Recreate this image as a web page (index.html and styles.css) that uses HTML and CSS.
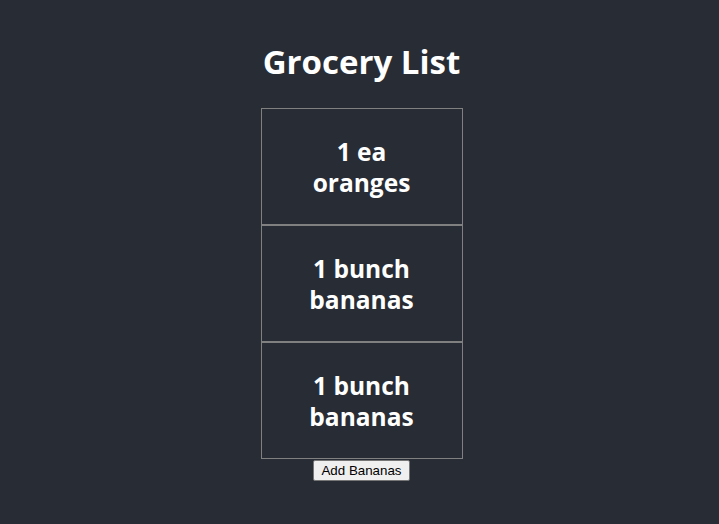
FILE: index.html
```html
<!DOCTYPE html>
<html>
<head>
<meta charset="utf-8">
<link rel="stylesheet" href="styles.css">
</head>
<body>
<div class="app">
  <h1 class="title">Grocery List</h1>
  <div class="list">
    <div class="item"><h2 class="item-text">1 ea oranges</h2></div>
    <div class="item"><h2 class="item-text">1 bunch bananas</h2></div>
    <div class="item"><h2 class="item-text">1 bunch bananas</h2></div>
  </div>
  <button class="add-btn">Add Bananas</button>
</div>
</body>
</html>
```
FILE: styles.css
```css
html, body {
  margin: 0;
  padding: 0;
  background: #282c34;
  height: 100%;
}
.app {
  display: flex;
  flex-direction: column;
  align-items: center;
  padding-top: 42px;
  padding-left: 4px;
  color: #fff;
  font-family: "Open Sans", "DejaVu Sans", sans-serif;
}
.title {
  margin: 0 0 26px 0;
  font-size: 33px;
  line-height: 40px;
  font-weight: 700;
}
.list {
  display: flex;
  flex-direction: column;
}
.item {
  width: 120px;
  padding: 6px 40px;
  border: 1px solid #808080;
  text-align: center;
}
.item-text {
  margin: 21px 0 20px;
  font-size: 24.5px;
  line-height: 31px;
  font-weight: 700;
}
.add-btn {
  margin-top: 1px;
  font-family: "Liberation Sans", Arial, sans-serif;
  font-size: 13.33px;
  padding: 2px 7px;
  color: #000;
  background: #efefef;
  border: 1px solid #767676;
  border-radius: 2px;
}
```
